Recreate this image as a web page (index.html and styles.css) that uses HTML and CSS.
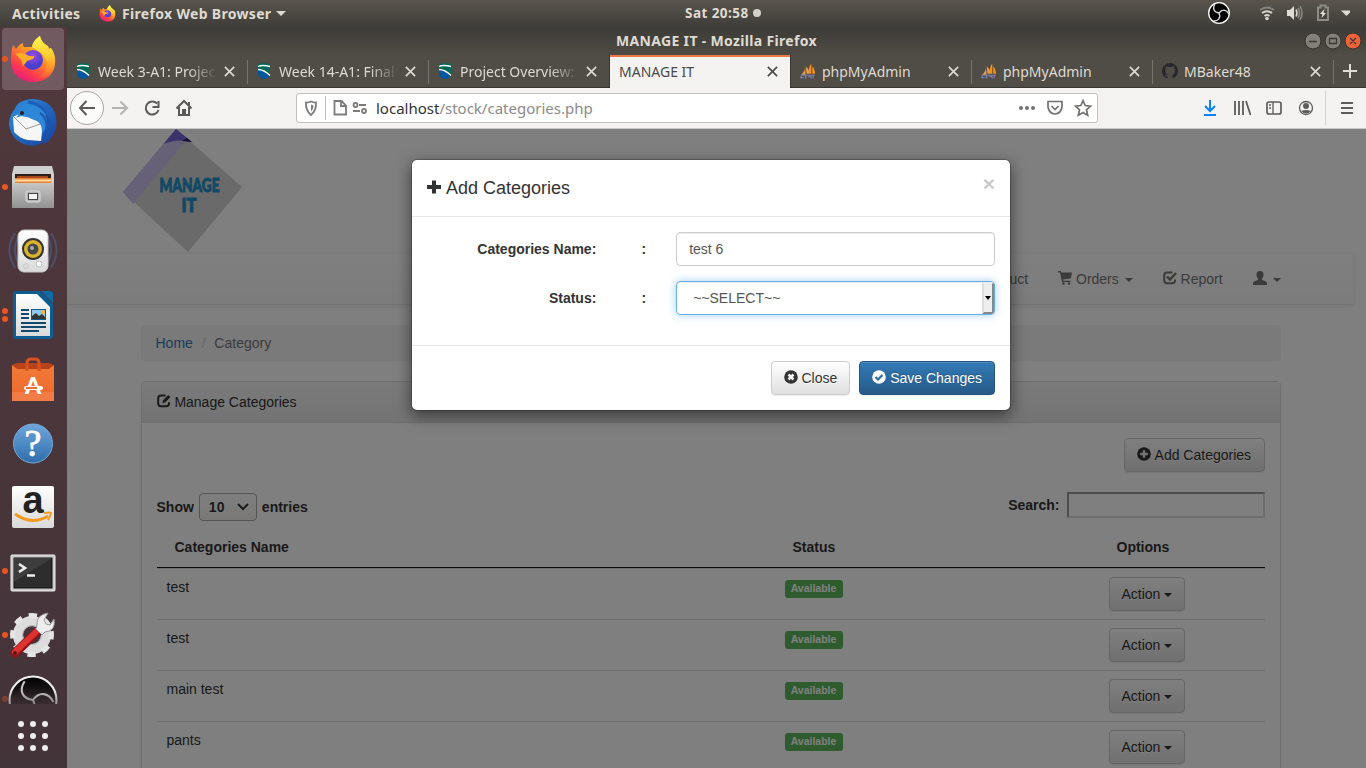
FILE: index.html
```html
<!DOCTYPE html>
<html lang="en">
<head>
<meta charset="utf-8">
<title>MANAGE IT</title>
<link rel="stylesheet" href="styles.css">
</head>
<body>
<svg class="defs" width="0" height="0">
  <defs>
    <linearGradient id="fox" x1=".8" y1="0" x2=".2" y2="1"><stop offset="0" stop-color="#fff04a"/><stop offset=".4" stop-color="#ff9a22"/><stop offset=".75" stop-color="#ff3a4d"/><stop offset="1" stop-color="#e0168a"/></linearGradient>
    <linearGradient id="flame" x1=".4" y1="0" x2=".5" y2="1"><stop offset="0" stop-color="#fff450"/><stop offset=".5" stop-color="#ffcc30"/><stop offset="1" stop-color="#ff7a2a" stop-opacity=".2"/></linearGradient>
    <radialGradient id="globe" cx=".5" cy=".3"><stop offset="0" stop-color="#a04be0"/><stop offset="1" stop-color="#4a3fd0"/></radialGradient>
    <linearGradient id="bird" x1="0" y1="0" x2="1" y2="1"><stop offset="0" stop-color="#2f8fe0"/><stop offset="1" stop-color="#173f9c"/></linearGradient>
    <linearGradient id="silver" x1="0" y1="0" x2="0" y2="1"><stop offset="0" stop-color="#c6c6c6"/><stop offset="1" stop-color="#929292"/></linearGradient>
    <linearGradient id="white" x1="0" y1="0" x2="0" y2="1"><stop offset="0" stop-color="#fff"/><stop offset="1" stop-color="#dadada"/></linearGradient>
    <linearGradient id="orange" x1="0" y1="0" x2="0" y2="1"><stop offset="0" stop-color="#f07b37"/><stop offset=".75" stop-color="#ef6c2f"/><stop offset=".76" stop-color="#f27c45"/><stop offset="1" stop-color="#f27c45"/></linearGradient>
    <linearGradient id="blue" x1="0" y1="0" x2="0" y2="1"><stop offset="0" stop-color="#6ea6dc"/><stop offset="1" stop-color="#2f6eac"/></linearGradient>
    <linearGradient id="obsg" x1="0" y1="0" x2="0" y2="1"><stop offset="0" stop-color="#000"/><stop offset=".5" stop-color="#2b2326"/></linearGradient>
    <symbol id="firefox" viewBox="0 0 46 48">
      <path d="M3 10c1 1 2 2 3 4 2-3 4-5 7-6 0 2 0 3 1 4h8C23 6 27 3 30 1c1 5 4 8 8 10l1 3 2-1c3 4 5 9 4 16-1 11-10 18-22 18S1 39 1 27C1 21 1 16 3 10z" fill="url(#fox)"/>
      <circle cx="23" cy="25" r="10" fill="url(#globe)"/>
      <path d="M22 12C23 6 27 3 30 1c1 5 4 8 8 10l1 3 2-1c4 6 5 16 0 24-4 5-10 7-13 6 8-4 11-13 7-20-3-6-8-8-13-11z" fill="url(#flame)"/>
      <path d="M5 19c6-2 10-1 14 2h5c1 3-4 4-7 5-2 4-4 3-4 6-1-4 0-7-8-13z" fill="#ffae2b"/>
    </symbol>
    <symbol id="obs" viewBox="0 0 48 48">
      <circle cx="24" cy="24" r="22.500" fill="url(#obsg)" stroke="#eee" stroke-width="2"/>
      <g fill="none" stroke="#ccc" stroke-width="2"><path id="blade" d="M24 24c-10-1-14-9-8-18"/><use href="#blade" transform="rotate(120 24 24)"/><use href="#blade" transform="rotate(240 24 24)"/></g>
    </symbol>
    <symbol id="school" viewBox="0 0 14 16"><path d="M1 1c4-1 8-1 12 0v9c0 3-2 5-6 6-4-1-6-3-6-6z" fill="#00695a"/><path d="M1 6c5 1 9 3 12 7-2 2-4 3-6 3-4-1-6-3-6-7z" fill="#0057a0"/><path d="M1 3.500c4-2 8-1 12 0M1 6.500c5 0 9 3 12 6" stroke="#fff" stroke-width="1.300" fill="none"/></symbol>
    <symbol id="pma" viewBox="0 0 17 16"><path d="M5 1C6 5 5 9 1 12h5zM6 3l1 8h3C10 7 8 5 6 3z" fill="#e5a050"/><path d="M12 0c-3 4-3 7-2 11h2zm1 3v8h3c0-3-1-6-3-8z" fill="#f89010"/><path d="M1 12.500h15M1 15h3m2-2v3m3-2h3m2-2v4M1 13v3m4-1h2m5-1v2" stroke="#7f7fac" stroke-width="1.200"/></symbol>
    <symbol id="x" viewBox="0 0 10 10"><path d="M.8.8l8.400 8.400M9.200.8L.8 9.200" stroke="currentColor" stroke-width="1.500"/></symbol>
    <symbol id="edit" viewBox="0 0 14 14"><path d="M8.500 1.500H4Q1.200 1.500 1.200 4v5.500q0 2.700 2.800 2.700h5.300q2.700 0 2.700-2.700V8.200" fill="none" stroke="currentColor" stroke-width="2"/><path d="M5.500 9.200l.6-2.900L11.200 1l2.200 2.100-5.200 5.300z" fill="currentColor"/></symbol>
  </defs>
</svg>

<header class="topbar">
  <span class="activities">Activities</span>
  <svg class="app-icon"><use href="#firefox"/></svg>
  <span class="app-name">Firefox Web Browser</span><i class="tri"></i>
  <span class="clock">Sat 20:58<i></i></span>
  <svg class="tray" width="150" height="26" viewBox="0 0 150 26">
    <svg x="7" y="1" width="24" height="24" viewBox="0 0 24 24"><circle cx="12" cy="12" r="10.300" fill="#000" stroke="#fff" stroke-width="1.300"/><g fill="none" stroke="#ddd" stroke-width="1.300"><path id="blade-small" d="M12 12c-5-.5-7-4.500-4-9"/><use href="#blade-small" transform="rotate(120 12 12)"/><use href="#blade-small" transform="rotate(240 12 12)"/></g></svg>
    <g fill="none" stroke="#d5d3cf" stroke-width="2"><path d="M60 10q7-5 14 0" opacity=".4"/><path d="M62 13q5-3.600 10 0M64.500 16q2.500-2 5 0"/></g><circle cx="67" cy="18.500" r="1.800" fill="#d5d3cf"/>
    <path d="M87 10h3l4-4v14l-4-4h-3z" fill="#dfdcd8"/><path d="M96 9.500q2 3.500 0 7" stroke="#dfdcd8" stroke-width="1.500" fill="none"/><path d="M98 8q3 5 0 10M100 6q4 7 0 14" stroke="#8c8a84" stroke-width="1.500" fill="none"/>
    <path d="M118 7.500h2.500v-2h5v2h2.500v12.500h-10z" fill="none" stroke="#8e8b85" stroke-width="2"/><path d="M124.500 9l-4.500 5h2.500l-1 4 4.500-5h-2.500z" fill="#e8e6e2"/>
    <path d="M141 10.500h11l-5.500 5.500z" fill="#dfdcd8"/>
  </svg>
</header>

<div class="desktop">
  <nav class="dock">
    <div class="slot active run"><svg width="46" height="48"><use href="#firefox"/></svg></div>
    <div class="slot"><svg width="50" height="50" viewBox="0 0 50 50">
      <path d="M18 2c10-3 22 1 27 9 5 9 5 22-2 29-2 3-5 5-8 7l2-4c-4 3-8 4-12 5C12 47 3 40 1 27c0-7 2-12 6-16 1-5 6-8 11-9z" fill="url(#bird)"/>
      <path d="M5 19l6-3 11-4 13 13-2 18-13-1c-6-1-10-4-14-8z" fill="#f6f6f6"/><path d="M6 19l12 12 17-6" fill="none" stroke="#999"/>
      <path d="M11 11c4-7 16-8 24 0 6 7 5 17-1 25 0-8-1-12-8-14-5-2-11-6-18-2 3-3 3-6 3-9z" fill="#2c87d8"/><path d="M32 15c8 6 8 14 4 25M38 17c5 8 4 15 1 22" stroke="#1a54ad" fill="none" stroke-width="2"/><circle cx="14" cy="15" r="2" fill="#202020"/><path d="M20 4c8 1 15 5 19 12" stroke="#1d5fb7" stroke-width="3" fill="none"/></svg></div>
    <div class="slot run"><svg width="44" height="46" viewBox="0 0 44 46">
      <path d="M3 2h38l2 8v34H1V10z" fill="#cfcfcf"/><path d="M4 10h36v10H4z" fill="#2e211c"/><path d="M6 12h31v4H6z" fill="#a8471c"/><path d="M4 14h36v5H4z" fill="#e9822f"/><path d="M4 15.500h36v2H4z" fill="#ffd9a4"/>
      <path d="M1 19h42v25H1z" fill="url(#silver)"/><rect x="15" y="27" width="14" height="11" rx="2" fill="#b5b5b5" stroke="#dedede"/><rect x="17.500" y="29.500" width="9" height="6" fill="#f4f4f4" stroke="#444"/></svg></div>
    <div class="slot"><svg width="50" height="46" viewBox="0 0 50 46">
      <g fill="none" stroke="#4b5169" stroke-width="2"><path d="M7 5q-11 17 0 35M11 7Q3 22 11 37M43 5q11 17 0 35M39 7q8 15 0 30"/></g>
      <rect x="10" y="2" width="30" height="42" rx="6" fill="url(#white)" stroke="#c8c8c8"/><circle cx="25" cy="21" r="11" fill="#333"/><circle cx="25" cy="21" r="9" fill="#d9b32a"/><circle cx="25" cy="21" r="5.500" fill="#47474a"/><circle cx="24" cy="20" r="2" fill="#aaa"/><circle cx="31" cy="36" r="3" fill="#fff" stroke="#bbb"/><circle cx="18" cy="38" r="2.500" fill="#ddd" stroke="#ccc"/></svg></div>
    <div class="slot run two"><svg width="42" height="50" viewBox="0 0 42 50">
      <path d="M4 1h24l13 13v32q0 3-3 3H4q-3 0-3-3V4q0-3 3-3z" fill="#0b5d92"/><path d="M29 1h9q3 0 3 3v9z" fill="#0f6aa5"/><path d="M4 4h21l13 13v29H4z" fill="url(#white)"/>
      <path d="M9 20h8M9 24h8M9 28h8M9 33h25M9 37h25M9 41h18" stroke="#0f4a6e" stroke-width="2"/><path d="M19 19h15v11H19z" fill="#0b5d92"/><path d="M20 20h13v9H20z" fill="#8fc7ea"/><path d="M20 29v-3l4-3 3 3 3-2 3 3v2z" fill="#333"/><circle cx="31" cy="22" r="2" fill="#e9b93c"/></svg></div>
    <div class="slot"><svg width="44" height="46" viewBox="0 0 44 46">
      <path d="M1 9l5-2h32l5 2-2 5H3z" fill="#b8421a"/><path d="M1 9l5 4h32l5-4v36H1z" fill="url(#orange)"/><path d="M16 15V7q0-4 4-4h4q4 0 4 4v8" fill="none" stroke="#d9531f" stroke-width="3"/><text x="22" y="38" class="bag-letter">A</text><rect x="13" y="30" width="19" height="4" rx="2" fill="#fff"/><path d="M15 32h11" stroke="#ee6c2f" stroke-width="2"/></svg></div>
    <div class="slot"><svg width="42" height="42" viewBox="0 0 42 42"><circle cx="21" cy="21.500" r="19.500" fill="url(#blue)" stroke="#78a9d6"/><text x="21" y="34" class="help-mark">?</text></svg></div>
    <div class="slot"><svg width="42" height="42" viewBox="0 0 42 42"><rect width="42" height="42" rx="2" fill="url(#white)"/><text x="21" y="27" class="amazon-letter">a</text><path d="M3 28q17 12 33 2" fill="none" stroke="#f49b1f" stroke-width="3"/><path d="M32 27q7-1 7 0t-3 7" fill="none" stroke="#f49b1f" stroke-width="2"/></svg></div>
    <div class="slot run low"><svg width="46" height="38" viewBox="0 0 46 38"><rect x="1" y="1" width="44" height="36" rx="1" fill="#c8c8c8" stroke="#eee"/><rect x="4" y="4" width="38" height="30" fill="#2d2d2d" stroke="#111"/><path d="M4 4h38L4 28z" fill="#3d3d3d"/><path d="M9 10l6 4-6 4M17 21.500h8" fill="none" stroke="#eee" stroke-width="2.600"/></svg></div>
    <div class="slot run"><svg width="46" height="48" viewBox="0 0 46 48">
      <circle cx="22" cy="24" r="14" fill="none" stroke="#dcdcdc" stroke-width="10"/><circle cx="22" cy="24" r="19.500" fill="none" stroke="#e6e6e6" stroke-width="5" stroke-dasharray="8 7.315" transform="rotate(-11 22 24)"/><circle cx="22" cy="24" r="9.500" fill="none" stroke="#b5b5b5"/>
      <path d="M5 42L29 19" stroke="#8e1217" stroke-width="9" stroke-linecap="round"/><path d="M5 41L28 19" stroke="#dd3232" stroke-width="6" stroke-linecap="round"/><circle cx="5" cy="42" r="2" fill="#5e1111"/><path d="M27 14q-1-10 11-12l-4 7 2 4 4 1 4-6q2 12-9 13l-3 3-6-6z" fill="#eee" stroke="#999"/></svg></div>
    <div class="slot cut run"><svg width="50" height="50"><use href="#obs"/></svg></div>
    <div class="apps"><i></i><i></i><i></i><i></i><i></i><i></i><i></i><i></i><i></i></div>
  </nav>

  <section class="window">
    <div class="titlebar"><span>MANAGE IT - Mozilla Firefox</span>
      <svg class="winbtns" width="58" height="20" viewBox="0 0 58 20"><g stroke="#33322e"><circle cx="9" cy="10" r="8" fill="#827f78"/><circle cx="29" cy="10" r="8" fill="#827f78"/><circle cx="49" cy="10" r="8" fill="#ee6238"/></g><path d="M5 10.500h8M25.500 7.500h7v5h-7zM46 7l6 6m0-6l-6 6" fill="none" stroke="#3a3935" stroke-width="1.300"/></svg>
    </div>
    <div class="tabs">
      <div class="tab"><svg class="fav"><use href="#school"/></svg><span class="t fade">Week 3-A1: Projec</span><svg class="close"><use href="#x"/></svg></div>
      <div class="tab"><svg class="fav"><use href="#school"/></svg><span class="t fade">Week 14-A1: Final</span><svg class="close"><use href="#x"/></svg></div>
      <div class="tab nosep"><svg class="fav"><use href="#school"/></svg><span class="t fade">Project Overview:</span><svg class="close"><use href="#x"/></svg></div>
      <div class="tab current"><span class="t">MANAGE IT</span><svg class="close"><use href="#x"/></svg></div>
      <div class="tab"><svg class="fav wide"><use href="#pma"/></svg><span class="t">phpMyAdmin</span><svg class="close"><use href="#x"/></svg></div>
      <div class="tab"><svg class="fav wide"><use href="#pma"/></svg><span class="t">phpMyAdmin</span><svg class="close"><use href="#x"/></svg></div>
      <div class="tab"><svg class="fav wide" viewBox="0 0 16 16"><path d="M8 0a8 8 0 0 0-2.500 15.600V13C3.500 13.500 3 12 2.500 11.500 5 12 4.500 12.500 5.500 11.500 3 11 3 8 3.500 5.500L3.700 3 6 4h4l2.300-1 .2 2.500c.7 2.500.5 5.500-2 6v4.100A8 8 0 0 0 8 0z" fill="#25292e"/></svg><span class="t">MBaker48</span><svg class="close"><use href="#x"/></svg></div>
      <svg class="newtab" width="14" height="14"><path d="M7 0v14M0 7h14" stroke="#dfdcd6" stroke-width="2"/></svg>
    </div>
    <div class="toolbar">
      <svg class="navbtns" width="134" height="40" viewBox="0 0 134 40">
        <circle cx="20" cy="20" r="16.500" fill="#fbfbfa" stroke="#a6a5a3"/>
        <g fill="none" stroke="#5b5a58" stroke-width="2"><path d="M28 20H13m6.500-7L13 20l6.500 7"/><path d="M45 20h15m-6.500-6.500L60 20l-6.500 6.500" stroke="#b5b4b2"/><path d="M90 15.500A6.500 6.500 0 1 0 91.500 22M91.500 13v6h-6"/><path d="M109.500 20.500L117 13l7.500 7.500M112 19v8h10v-8"/></g><path d="M115 21h4v6h-4zM121 14h2v4h-2z" fill="#5b5a58"/>
      </svg>
      <div class="urlbar">
        <svg width="76" height="28" viewBox="0 0 76 28" fill="none" stroke="#7d7c7a" stroke-width="1.800"><path d="M14 7.500q3 1.300 5 1 .5 8-5 12.500-5.500-4.500-5-12.500 2 .3 5-1z"/><path d="M14 10.500v7q2.500-2 2.500-6z" fill="#7d7c7a" stroke="none"/><path d="M28.500 2v24" stroke="#bbb" stroke-width="1"/><path d="M37.500 7h7l4.500 4.500V20.500H37.500zM44 7v5h5"/><circle cx="58.500" cy="11" r="2"/><path d="M62 11h7M56 17h7"/><circle cx="67" cy="17" r="2"/></svg>
        <span class="url">localhost<em>/stock/categories.php</em></span>
        <svg width="80" height="28" viewBox="0 0 80 28" fill="none" stroke="#737270" stroke-width="1.700"><g fill="#737270" stroke="none"><circle cx="4" cy="14" r="2"/><circle cx="10" cy="14" r="2"/><circle cx="16" cy="14" r="2"/></g><path d="M31 7.500h14v5.500q-1 6.500-7 7-6-.5-7-7z"/><path d="M34.500 12l3.500 3.500 3.500-3.500"/><path d="M66 6.500l2.200 5 5.300.6-4 3.700 1.200 5.400-4.700-2.700-4.700 2.700 1.200-5.400-4-3.700 5.300-.6z"/></svg>
      </div>
      <svg class="tools" width="166" height="40" viewBox="0 0 166 40" fill="none" stroke="#5d5c5a" stroke-width="2"><path d="M10 12v11m-5-5l5 5 5-5M4 27h12" stroke="#0a84ff"/><path d="M35 13v14M39 13v14M43 13v14M46 13l4.500 14" stroke-width="1.800"/><rect x="67" y="14" width="14" height="12" rx="2" stroke-width="1.700"/><path d="M73 14v12M69 17h2m-2 3h2" stroke-width="1.300"/><circle cx="106" cy="20" r="6.500" stroke-width="1.300"/><circle cx="106" cy="18" r="3" fill="#5d5c5a" stroke="none"/><path d="M101 23q5-2 10 0-5 5-10 0z" fill="#5d5c5a" stroke="none"/><path d="M125.500 3v34" stroke="#d5d3d1" stroke-width="1"/><path d="M141 15h12m-12 5h12m-12 5h12"/></svg>
    </div>

    <main class="page">
      <div class="site">
        <div class="brand"><svg width="120" height="124" viewBox="0 0 120 124"><path d="M53 0l66 58-54 65L0 63z" fill="#d4d4d4"/><path d="M53 0L0 63l10 12L62 13z" fill="#cfc3f0"/><path d="M53 0L40.500 15Q52 10 62 12l7 1z" fill="#7265d6"/><path d="M59 12l5-3 5 4z" fill="#28206e"/><text x="66.500" y="63" class="brand-text" textLength="60" lengthAdjust="spacingAndGlyphs">MANAGE</text><text x="66" y="83" class="brand-text" textLength="15" lengthAdjust="spacingAndGlyphs">IT</text></svg></div>
        <div class="navbar">
          <a>Product</a>
          <a><svg width="14" height="14" viewBox="0 0 14 14"><path d="M0 0h2.700l.7 1.500H14L12.800 7.500 5 8.500l.3 1.200h7.200V11H4L2 1.500H0z" fill="currentColor"/><circle cx="5.500" cy="12.500" r="1.200" fill="currentColor"/><circle cx="11" cy="12.500" r="1.200" fill="currentColor"/></svg> Orders <b class="caret"></b></a>
          <a><svg width="14" height="14" viewBox="0 0 14 14"><path d="M9.500 1.500H4Q1.200 1.500 1.200 4v5.500q0 2.700 2.800 2.700h5.300q2.700 0 2.700-2.700V8.500" fill="none" stroke="currentColor" stroke-width="2"/><path d="M4 5.500l3 3L13 2" fill="none" stroke="currentColor" stroke-width="2.400"/></svg> Report</a>
          <a><svg width="14" height="14" viewBox="0 0 14 14"><path d="M7 0q4 0 3.500 4.500-.3 2-1.500 3v1.500q5 1.500 5 3V14H0v-2q0-1.500 5-3V7.500q-1.200-1-1.500-3Q3 0 7 0z" fill="currentColor"/></svg> <b class="caret"></b></a>
        </div>
        <div class="container">
          <div class="breadcrumb"><a>Home</a><i>/</i><span>Category</span></div>
          <div class="panel">
            <div class="panel-heading"><svg width="14" height="14"><use href="#edit"/></svg> Manage Categories</div>
            <div class="panel-body">
              <div class="actions"><button class="btn add"><svg width="14" height="14" viewBox="0 0 14 14"><circle cx="7" cy="7" r="6.800" fill="currentColor"/><path d="M7 3.200v7.600M3.200 7h7.600" stroke="#e8e8e8" stroke-width="2.400"/></svg> Add Categories</button></div>
              <div class="filters">
                <label class="length">Show <span class="count">10<svg width="12" height="8"><path d="M1 1l5 5 5-5" fill="none" stroke="#333" stroke-width="2"/></svg></span> entries</label>
                <label class="search">Search:<input type="text"></label>
              </div>
              <div class="row head"><b>Categories Name</b><b>Status</b><b>Options</b></div>
              <div class="row"><span>test</span><span><em class="label">Available</em></span><span><button class="btn">Action <b class="caret"></b></button></span></div>
              <div class="row"><span>test</span><span><em class="label">Available</em></span><span><button class="btn">Action <b class="caret"></b></button></span></div>
              <div class="row"><span>main test</span><span><em class="label">Available</em></span><span><button class="btn">Action <b class="caret"></b></button></span></div>
              <div class="row"><span>pants</span><span><em class="label">Available</em></span><span><button class="btn">Action <b class="caret"></b></button></span></div>
            </div>
          </div>
        </div>
      </div>
      <div class="backdrop">
        <form class="modal">
          <div class="modal-header"><h4><svg width="15" height="15" viewBox="0 0 15 15"><path d="M7 .5v13M0 7h14" stroke="#333" stroke-width="4"/></svg> Add Categories</h4><span class="dismiss">×</span></div>
          <div class="modal-body">
            <div class="group"><label>Categories Name:</label><label>:</label><div><div class="control">test 6</div></div></div>
            <div class="group"><label>Status:</label><label>:</label><div><div class="control focus"><span>~~SELECT~~</span><i class="drop"></i></div></div></div>
          </div>
          <div class="modal-footer">
            <button type="button" class="btn"><svg width="14" height="14" viewBox="0 0 14 14"><circle cx="7" cy="7" r="6.800" fill="currentColor"/><path d="M4.500 4.500l5 5m0-5l-5 5" stroke="#f4f4f4" stroke-width="2.600"/></svg> Close</button>
            <button type="button" class="btn primary"><svg width="14" height="14" viewBox="0 0 14 14"><circle cx="7" cy="7" r="6.800" fill="#fff"/><path d="M3.500 7l2.500 2.500L10.500 5" fill="none" stroke="#2d6ca2" stroke-width="2.200"/></svg> Save Changes</button>
          </div>
        </form>
      </div>
    </main>
  </section>
</div>
</body>
</html>
```
FILE: styles.css
```css
* { box-sizing: border-box; }
body { margin: 0; width: 1366px; height: 768px; overflow: hidden; display: flex; flex-direction: column; font-family: "Noto Sans", sans-serif; }
.defs { position: absolute; }
svg { flex: none; }

/* desktop top bar */
.topbar { position: relative; height: 27px; flex: none; display: flex; align-items: center; padding-left: 12px; background: linear-gradient(#59554d, #3f3d39); color: #dfdbd2; font-size: 14px; font-weight: 700; }
.activities { width: 87px; letter-spacing: .35px; }
.app-icon { width: 17px; height: 17px; }
.app-name { margin-left: 6px; width: 149px; white-space: nowrap; letter-spacing: .32px; }
.tri { margin-left: 5px; border: 5px solid transparent; border-top-color: #dfdbd2; border-bottom: 0; }
.clock { position: absolute; left: 685px; width: 76px; display: flex; align-items: center; justify-content: space-between; font-size: 13.500px; letter-spacing: .45px; line-height: 26px; top: 0; }
.clock i { width: 8px; height: 8px; border-radius: 50%; background: #d3d0ca; }
.tray { position: absolute; left: 1200px; top: 0; }

.desktop { flex: 1; min-height: 0; display: flex; }

/* launcher */
.dock { width: 67px; flex: none; display: flex; flex-direction: column; background: linear-gradient(#51383c, #43343a); }
.slot { position: relative; height: 64px; flex: none; display: flex; align-items: center; justify-content: center; padding-right: 2px; }
.slot.low { padding-top: 3px; }
.slot svg { z-index: 1; overflow: visible; }
.slot.active::after { content: ""; position: absolute; inset: 1px 3px 1px 2px; border-radius: 4px; background: #715b60; }
.slot.run::before { content: ""; position: absolute; z-index: 2; left: 2px; top: 29px; width: 6px; height: 6px; border-radius: 50%; background: #e95420; }
.slot.two::before { top: 25px; box-shadow: 0 8px #e95420; }
.slot.cut { height: 37px; overflow: hidden; align-items: flex-start; padding-top: 8px; -webkit-mask-image: linear-gradient(#000 60%, rgba(0,0,0,.5)); }
.slot.cut::before { opacity: .5; }
.apps { display: grid; grid-template-columns: repeat(3, 6px); gap: 6px; justify-content: center; padding: 17px 2px 0 0; }
.apps i { width: 6px; height: 6px; border-radius: 50%; background: #eee; }
.bag-letter { font: 900 23px Lato, sans-serif; fill: #fff; text-anchor: middle; }
.help-mark { font: 38px "Liberation Serif", serif; fill: #fff; stroke: #fff; stroke-width: .8px; text-anchor: middle; }
.amazon-letter { font: bold 38px "Liberation Sans", sans-serif; fill: #222; text-anchor: middle; }

/* browser chrome */
.window { flex: 1; min-width: 0; display: flex; flex-direction: column; }
.titlebar { position: relative; height: 28px; flex: none; background: linear-gradient(#3c3b37, #4f4b45); color: #dfdbd2; font-size: 14px; font-weight: 700; letter-spacing: .33px; line-height: 28px; text-align: center; }
.winbtns { position: absolute; right: 4px; top: 4px; }
.tabs { height: 33px; flex: none; display: flex; align-items: center; background: #504c46; border-bottom: 1px solid #37352f; }
.tab { position: relative; width: 181px; height: 32px; flex: none; display: flex; align-items: center; padding-left: 9px; color: #dfdbd2; font-size: 14px; }
.tab:not(.nosep):not(.current)::after { content: ""; position: absolute; right: 0; top: 5px; width: 1px; height: 24px; background: #77746d; }
.fav { width: 14px; height: 16px; margin-right: 8px; }
.fav.wide { width: 16px; margin-right: 6px; }
.t { flex: 1; min-width: 0; white-space: nowrap; }
.fade { -webkit-mask-image: linear-gradient(90deg, #000 75%, transparent); }
.close { width: 11px; height: 11px; margin: 0 13px 0 6.500px; }
.current { height: 33px; width: 180px; margin: 0 1px -1px 0; background: #f4f3f2; border-top: 2px solid #f07746; box-shadow: -1px 0 #37352f, 1px 0 #37352f; color: #4a4a4a; line-height: 28px; padding-bottom: 2px; }
.current .close { margin-right: 12px; }
.newtab { margin-left: 9px; }
.toolbar { height: 41px; flex: none; display: flex; align-items: center; background: #f4f3f2; border-bottom: 1px solid #c9c8c6; }
.navbtns { margin-right: 95px; }
.urlbar { width: 802px; height: 30px; display: flex; align-items: center; background: #fff; border: 1px solid #c1c0be; border-radius: 3px; }
.url { flex: 1; padding-left: 3px; font-size: 15px; color: #333; }
.url em { font-style: normal; color: #8a8a8a; }
.tools { margin-left: 102px; }

/* stock site */
.page { position: relative; flex: 1; min-height: 0; overflow: hidden; background: #fff; font: 14px/20px "Liberation Sans", Arial, sans-serif; color: #333; }
.site { width: 1287px; }
.brand { height: 124px; padding-left: 56px; }
.brand svg { display: block; }
.brand-text { font: 900 18px Lato, sans-serif; fill: #2192c8; stroke: #2192c8; stroke-width: .9px; text-anchor: middle; }
.navbar { height: 52px; margin-bottom: 20px; padding-right: 57.500px; display: flex; justify-content: flex-end; align-items: center; background: linear-gradient(#fff, #f8f8f8); border: 1px solid #e7e7e7; border-top-color: #fafafa; border-right-color: #f8f8f8; border-left: 0; box-shadow: 0 1px 5px rgba(0,0,0,.075); color: #777; }
.navbar a { padding: 0 15px; white-space: nowrap; text-shadow: 0 1px 0 rgba(255,255,255,.25); }
.navbar svg, .btn svg, .panel-heading svg { vertical-align: -1px; }
.caret { display: inline-block; margin-left: 2px; vertical-align: middle; border: 4px solid transparent; border-top-color: currentColor; border-bottom: 0; }
.container { width: 1170px; margin: 0 auto; padding: 0 15px; }
.breadcrumb { display: flex; height: 36px; padding: 8px 15px; margin-bottom: 20px; background: #f5f5f5; border-radius: 4px; color: #777; }
.breadcrumb a { color: #337ab7; }
.breadcrumb i { width: 21.500px; text-align: center; font-style: normal; color: #ccc; }
.panel { height: 500px; border: 1px solid #ddd; border-radius: 4px; box-shadow: 0 1px 2px rgba(0,0,0,.05); }
.panel-heading { height: 41px; padding: 10px 15px; border-bottom: 1px solid #ddd; background: linear-gradient(#f5f5f5, #e8e8e8); }
.panel-body { padding: 15px; }
.actions { display: flex; justify-content: flex-end; height: 54px; }
.btn { height: 34px; padding: 6px 12px; font: 14px/20px "Liberation Sans", Arial, sans-serif; color: #333; white-space: nowrap; border: 1px solid #ccc; border-radius: 4px; background: linear-gradient(#fff, #e0e0e0); text-shadow: 0 1px 0 #fff; box-shadow: inset 0 1px 0 rgba(255,255,255,.15), 0 1px 1px rgba(0,0,0,.075); }
.btn.add { width: 141px; }
.btn.add svg { margin-right: .5px; }
.btn .caret { margin-left: 0; }
.btn.primary { color: #fff; background: linear-gradient(#337ab7, #265a88); border-color: #245580; text-shadow: 0 -1px 0 rgba(0,0,0,.2); }
.filters { display: flex; justify-content: space-between; height: 35px; font-weight: bold; }
.length { display: flex; align-items: center; gap: 5px; height: 30px; }
.count { display: flex; align-items: center; justify-content: space-between; width: 58px; height: 28px; padding: 0 7px 0 9px; border: 1px solid #aaa; border-radius: 4px; background: linear-gradient(#fff, #f4f2ef); }
.search { display: flex; align-items: center; gap: 7px; height: 26px; }
.search input { width: 198px; height: 26px; border: 2px solid; border-color: #9a9a9a #ddd #ddd #9a9a9a; background: #fff; }
.row { display: grid; grid-template-columns: 618px 324px 166px; height: 51px; padding-top: 8px; border-top: 1px solid #ddd; }
.row > * { padding: 0 10px; }
.row.head { height: 41px; padding-top: 10px; border-top: 0; border-bottom: 1px solid #111; }
.row.head > * { padding: 0 18px; }
.label { display: inline-block; width: 58px; text-align: center; padding: 3px 0 4px; border-radius: 3px; background: #5cb85c; color: #fff; font: bold 10.500px/11px "Liberation Sans", Arial, sans-serif; }

/* dialog */
.backdrop { position: absolute; inset: 0; padding: 30px 0 0 344px; background: rgba(0,0,0,.5); }
.modal { width: 600px; border: 1px solid rgba(0,0,0,.2); border-radius: 6px; background: #fff; background-clip: padding-box; box-shadow: 0 5px 15px rgba(0,0,0,.5); }
.modal-header { display: flex; justify-content: space-between; height: 57px; padding: 15px; border-bottom: 1px solid #e5e5e5; }
.modal-header h4 { margin: 0; font-size: 18px; line-height: 26px; font-weight: 500; }
.modal-header svg { vertical-align: -1px; }
.dismiss { font-size: 21px; line-height: 18px; font-weight: bold; color: #ccc; }
.modal-body { padding: 15px 0; }
.group { display: grid; grid-template-columns: 199.330px 49.830px 1fr; margin-bottom: 15px; }
.group > * { padding: 0 15px; }
.group label { padding-top: 7px; font-weight: bold; text-align: right; }
.control { position: relative; display: flex; height: 34px; padding: 6px 12px; border: 1px solid #ccc; border-radius: 4px; box-shadow: inset 0 1px 1px rgba(0,0,0,.075); color: #555; }
.control.focus { padding-left: 16px; border-color: #66afe9; box-shadow: inset 0 1px 1px rgba(0,0,0,.075), 0 0 8px rgba(102,175,233,.6); }
.drop { position: absolute; right: 0; top: 0; width: 12px; height: 32px; display: grid; place-content: center; background: #eee; border: 2px solid; border-color: #eee #888 #888 #ddd; border-radius: 0 3px 3px 0; }
.drop::after { content: ""; border: 3.500px solid transparent; border-top: 4px solid #000; border-bottom: 0; }
.modal-footer { display: flex; justify-content: flex-end; gap: 9px; padding: 15px; border-top: 1px solid #e5e5e5; }
```
